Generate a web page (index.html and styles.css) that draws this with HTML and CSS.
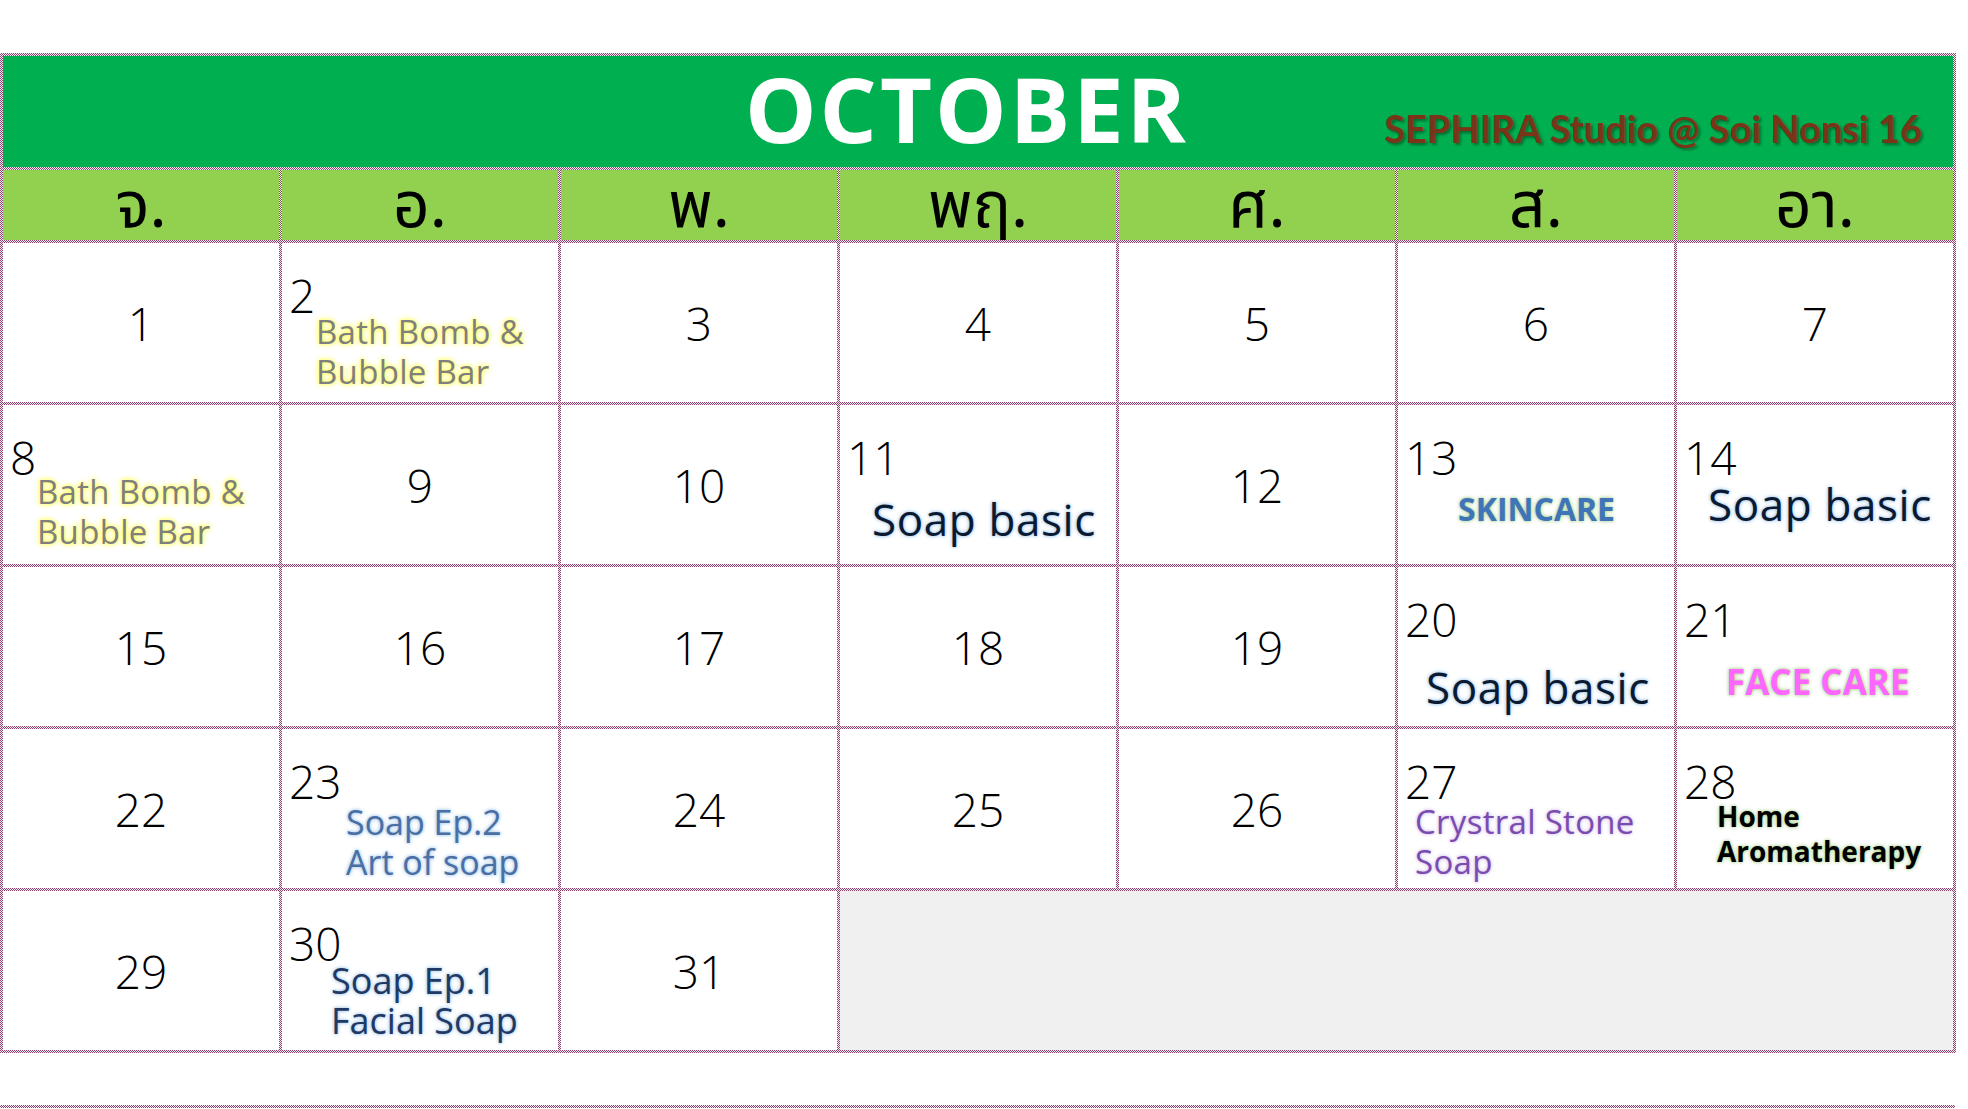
FILE: index.html
```html
<!DOCTYPE html>
<html lang="th">
<head>
<meta charset="utf-8">
<title>October</title>
<link rel="stylesheet" href="styles.css">
</head>
<body>
<div class="page">
  <div class="calendar">
    <div class="title-bar">
      <span class="month">OCTOBER</span>
      <span class="studio">SEPHIRA Studio @ Soi Nonsi 16</span>
    </div>

    <div class="day">จ.</div>
    <div class="day">อ.</div>
    <div class="day">พ.</div>
    <div class="day">พฤ.</div>
    <div class="day">ศ.</div>
    <div class="day">ส.</div>
    <div class="day">อา.</div>

    <div class="cell"><span class="num">1</span></div>
    <div class="cell ev"><span class="num">2</span><div class="event bath e2">Bath Bomb &amp;<br>Bubble Bar</div></div>
    <div class="cell"><span class="num">3</span></div>
    <div class="cell"><span class="num">4</span></div>
    <div class="cell"><span class="num">5</span></div>
    <div class="cell"><span class="num">6</span></div>
    <div class="cell"><span class="num">7</span></div>

    <div class="cell ev"><span class="num">8</span><div class="event bath e8">Bath Bomb &amp;<br>Bubble Bar</div></div>
    <div class="cell"><span class="num">9</span></div>
    <div class="cell"><span class="num">10</span></div>
    <div class="cell ev"><span class="num">11</span><div class="event basic e11">Soap basic</div></div>
    <div class="cell"><span class="num">12</span></div>
    <div class="cell ev"><span class="num">13</span><div class="event skincare e13">SKINCARE</div></div>
    <div class="cell ev"><span class="num">14</span><div class="event basic e14">Soap basic</div></div>

    <div class="cell"><span class="num">15</span></div>
    <div class="cell"><span class="num">16</span></div>
    <div class="cell"><span class="num">17</span></div>
    <div class="cell"><span class="num">18</span></div>
    <div class="cell"><span class="num">19</span></div>
    <div class="cell ev"><span class="num">20</span><div class="event basic e20">Soap basic</div></div>
    <div class="cell ev"><span class="num">21</span><div class="event face e21">FACE CARE</div></div>

    <div class="cell"><span class="num">22</span></div>
    <div class="cell ev"><span class="num">23</span><div class="event ep2 e23">Soap Ep.2<br>Art of soap</div></div>
    <div class="cell"><span class="num">24</span></div>
    <div class="cell"><span class="num">25</span></div>
    <div class="cell"><span class="num">26</span></div>
    <div class="cell ev"><span class="num">27</span><div class="event crystal e27">Crystral Stone<br>Soap</div></div>
    <div class="cell ev"><span class="num">28</span><div class="event aroma e28">Home<br>Aromatherapy</div></div>

    <div class="cell"><span class="num">29</span></div>
    <div class="cell ev"><span class="num">30</span><div class="event ep1 e30">Soap Ep.1<br>Facial Soap</div></div>
    <div class="cell"><span class="num">31</span></div>
    <div class="blank"></div>
  </div>
  <div class="rule"></div>
</div>
</body>
</html>
```

FILE: styles.css
```css
html, body {
  margin: 0;
  padding: 0;
  background: #ffffff;
}

body {
  width: 1968px;
  height: 1109px;
  overflow: hidden;
  font-family: "Open Sans", "Liberation Sans", sans-serif;
  color: #000;
}

.page {
  padding-top: 53px;
}

.calendar {
  width: 1956px;
  box-sizing: border-box;
  display: grid;
  grid-template-columns: repeat(7, 276px);
  grid-template-rows: 111px 70px repeat(5, 159px);
  gap: 3px;
  padding: 3px;
  background: repeating-conic-gradient(#8e3f6e 0% 25%, #f6eef2 0% 50%) 0 0 / 2px 2px;
}

.title-bar {
  grid-column: 1 / -1;
  background: #00b050;
  display: grid;
  grid-template-columns: 1fr auto 1fr;
}

.month {
  grid-column: 2;
  align-self: start;
  margin-top: 7px;
  margin-right: 22px;
  font-family: "Open Sans", sans-serif;
  font-weight: 700;
  font-size: 90px;
  line-height: 90px;
  letter-spacing: 3px;
  color: #ffffff;
}

.studio {
  grid-column: 3;
  justify-self: end;
  align-self: end;
  margin-right: 31px;
  margin-bottom: 19px;
  font-family: "Lato", "Open Sans", sans-serif;
  font-weight: 700;
  font-size: 38px;
  line-height: 40px;
  color: #7a3418;
  text-shadow: 2px 2px 3px rgba(0, 0, 0, 0.4);
  white-space: nowrap;
}

.day {
  background: #92d050;
  display: flex;
  align-items: center;
  justify-content: center;
  font-family: "Noto Sans Thai", "Noto Sans", "DejaVu Sans", sans-serif;
  font-size: 64px;
  line-height: 70px;
  padding-top: 6px;
  box-sizing: border-box;
}

.cell {
  background: #ffffff;
  display: flex;
  align-items: center;
  justify-content: center;
}

.num {
  font-family: "Open Sans", sans-serif;
  font-weight: 300;
  font-size: 46px;
  line-height: 46px;
}

.cell.ev {
  flex-direction: column;
  align-items: flex-start;
  justify-content: flex-start;
  padding: 35px 0 0 7px;
  box-sizing: border-box;
}

.cell.ev .num {
  line-height: 34px;
}

.event {
  font-family: "Open Sans", sans-serif;
  white-space: nowrap;
}

.blank {
  grid-column: 4 / span 4;
  background: #f0f0f0;
}

.rule {
  margin-top: 52px;
  width: 1955px;
  height: 3px;
  background: repeating-conic-gradient(#8e3f6e 0% 25%, #f6eef2 0% 50%) 0 0 / 2px 2px;
}

/* event styles */
.bath {
  font-size: 33px;
  line-height: 40px;
  letter-spacing: 0.3px;
  color: #7f7f7f;
  text-shadow: 0 0 3px #ffff66, 0 0 5px #ffff66, 0 0 6px #ffff99;
}

.basic {
  font-size: 44px;
  line-height: 44px;
  letter-spacing: 0.6px;
  color: #0b1a33;
  text-shadow: 0 0 3px #9dc3e6, 0 0 5px #bdd7ee;
}

.skincare {
  font-weight: 700;
  font-size: 32px;
  line-height: 36px;
  color: #3f74b8;
  text-shadow: 0 0 3px #a9d18e, 0 0 5px #c5e0b4;
}

.face {
  font-weight: 700;
  font-size: 35px;
  line-height: 36px;
  color: #ff66ff;
  text-shadow: 0 0 3px #a9d18e, 0 0 5px #c5e0b4;
}

.ep2 {
  font-size: 34px;
  line-height: 40px;
  color: #4a6fa5;
  text-shadow: 0 0 3px #9dc3e6, 0 0 5px #bdd7ee;
}

.crystal {
  font-size: 33px;
  line-height: 40px;
  letter-spacing: 0.3px;
  color: #7a4cb0;
  text-shadow: 0 0 3px #d5c2ea, 0 0 5px #e2d4f1;
}

.aroma {
  font-weight: 700;
  font-size: 28px;
  line-height: 35px;
  color: #000000;
  text-shadow: 0 0 3px #a9d18e, 0 0 5px #c5e0b4;
}

.ep1 {
  font-size: 36px;
  line-height: 40px;
  color: #1f3864;
  text-shadow: 0 0 3px #9dc3e6, 0 0 5px #bdd7ee;
}

.e2 { margin: 0 0 0 27px; }
.e8 { margin: -2px 0 0 27px; }
.e11 { margin: 23px 0 0 25px; }
.e13 { margin: 17px 0 0 53px; }
.e14 { margin: 8px 0 0 24px; }
.e20 { margin: 29px 0 0 21px; }
.e21 { margin: 28px 0 0 42px; }
.e23 { margin: 4px 0 0 57px; }
.e27 { margin: 4px 0 0 10px; }
.e28 { margin: 1px 0 0 33px; }
.e30 { margin: 1px 0 0 42px; }
```
